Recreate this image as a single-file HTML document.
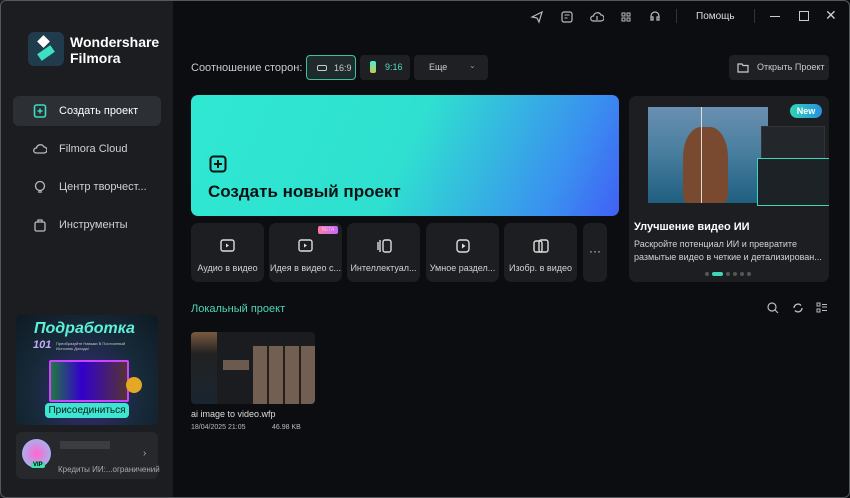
<!DOCTYPE html>
<html><head><meta charset="utf-8"><style>
*{margin:0;padding:0;box-sizing:border-box}
body{width:850px;height:498px;background:#0b0d10;font-family:"Liberation Sans","Noto Sans CJK SC",sans-serif;color:#fff;position:relative;overflow:hidden}
.win{position:absolute;inset:0;border:1px solid #55585d;border-radius:6px;pointer-events:none;z-index:9}
.side{position:absolute;left:0;top:0;width:173px;height:498px;background:#1b1d21}
.abs{position:absolute}
.nav{position:absolute;left:13px;width:148px;height:30px;border-radius:6px;font-size:11px;color:#cfd1d4;display:flex;align-items:center;padding-left:46px}
.nav svg{position:absolute;left:20px;top:8px}
.tool{position:absolute;top:223px;width:73px;height:59px;background:#1c1e22;border-radius:7px;font-size:9px;color:#d0d2d5;text-align:center}
.tool svg{position:absolute;left:28px;top:14px}
.tool span{position:absolute;left:0;right:0;top:40px;white-space:nowrap}
.ic{position:absolute;top:10px}
</style></head><body>
<div class="win"></div>
<div class="side">
  <div class="abs" style="left:28px;top:32px;width:36px;height:34px;background:#1f3b4c;border-radius:6px">
    <svg width="36" height="34"><rect x="11" y="5" width="9" height="9" fill="#fff" transform="rotate(45 15.5 9.5)"/><rect x="10" y="17" width="16" height="8" fill="#3de0c0" transform="rotate(-35 18 21)"/></svg>
  </div>
  <div class="abs" style="left:70px;top:34px;font-size:14px;font-weight:bold;line-height:16px">Wondershare<br>Filmora</div>
  <div class="nav" style="top:96px;background:#2c2f34;color:#fff">
    <svg width="14" height="14"><rect x="1.5" y="1" width="11" height="12" rx="2" fill="none" stroke="#3ddbc0" stroke-width="1.6"/><path d="M7 4.5v5M4.5 7h5" stroke="#3ddbc0" stroke-width="1.5"/></svg>Создать проект</div>
  <div class="nav" style="top:134px"><svg width="14" height="14"><path d="M3 11h8a3 3 0 0 0 0-6 4 4 0 0 0-7.5 1A2.5 2.5 0 0 0 3 11z" fill="none" stroke="#bbb" stroke-width="1.3"/></svg>Filmora Cloud</div>
  <div class="nav" style="top:172px"><svg width="14" height="14"><circle cx="7" cy="6" r="4.5" fill="none" stroke="#bbb" stroke-width="1.3"/><path d="M5 12h4" stroke="#bbb" stroke-width="1.3"/></svg>Центр творчест...</div>
  <div class="nav" style="top:210px"><svg width="14" height="14"><rect x="2" y="4" width="10" height="9" rx="1.5" fill="none" stroke="#bbb" stroke-width="1.3"/><path d="M5 4V2h4v2" fill="none" stroke="#bbb" stroke-width="1.3"/></svg>Инструменты</div>
  <div class="abs" style="left:16px;top:315px;width:142px;height:110px;border-radius:5px;background:radial-gradient(ellipse at 50% 70%,#3a2a80 0%,#172a3a 55%,#0e1a22 100%);overflow:hidden">
    <div class="abs" style="left:18px;top:5px;font-size:16px;font-weight:bold;font-style:italic;color:#5ef0d8">Подработка</div>
    <div class="abs" style="left:17px;top:24px;font-size:11px;font-weight:bold;font-style:italic;color:#c8a8ff">101</div>
    <div class="abs" style="left:40px;top:26px;font-size:4px;color:#ccc;width:80px">Преобразуйте Навыки В Постоянный Источник Дохода!</div>
    <div class="abs" style="left:33px;top:45px;width:80px;height:42px;background:linear-gradient(90deg,#274,#30c 40%,#533 100%);border:2px solid #c4f;border-radius:2px"></div>
    <div class="abs" style="left:110px;top:62px;width:16px;height:16px;border-radius:50%;background:#e5a824"></div>
    <div class="abs" style="left:29px;top:88px;width:84px;height:15px;background:#3ee6d0;border-radius:4px;color:#0b1a1a;font-size:10px;text-align:center;line-height:15px">Присоединиться</div>
  </div>
  <div class="abs" style="left:16px;top:432px;width:142px;height:47px;background:#26282c;border-radius:6px">
    <div class="abs" style="left:6px;top:7px;width:29px;height:29px;border-radius:50%;background:radial-gradient(circle,#f6c,#8cf)"></div>
    <div class="abs" style="left:15px;top:30px;font-size:6px;background:#3de0b0;color:#000;padding:0 2px;border-radius:2px;font-weight:bold">VIP</div>
    <div class="abs" style="left:44px;top:9px;width:50px;height:8px;background:#3a3d42"></div>
    <div class="abs" style="left:42px;top:33px;font-size:8px;color:#aaa;white-space:nowrap">Кредиты ИИ:...ограничений</div>
    <div class="abs" style="left:127px;top:16px;font-size:10px;color:#aaa">›</div>
  </div>
</div>
<svg class="ic" style="left:530px" width="14" height="14"><path d="M2 7l10-5-3 10-2-4z" fill="none" stroke="#bbb" stroke-width="1.2"/></svg>
<svg class="ic" style="left:560px" width="14" height="14"><rect x="2" y="2" width="10" height="10" rx="2" fill="none" stroke="#bbb" stroke-width="1.2"/><path d="M4.5 5h5M4.5 8h3" stroke="#bbb"/></svg>
<svg class="ic" style="left:590px" width="14" height="14"><path d="M3 11h8a3 3 0 0 0 0-6 4 4 0 0 0-7.5 1A2.5 2.5 0 0 0 3 11zM7 6v4" fill="none" stroke="#bbb" stroke-width="1.2"/></svg>
<svg class="ic" style="left:619px" width="14" height="14"><rect x="3" y="3" width="3" height="3" fill="none" stroke="#bbb"/><rect x="8" y="3" width="3" height="3" fill="none" stroke="#bbb"/><rect x="3" y="8" width="3" height="3" fill="none" stroke="#bbb"/><rect x="8" y="8" width="3" height="3" fill="none" stroke="#bbb"/></svg>
<svg class="ic" style="left:648px" width="14" height="14"><path d="M3 8V6a4 4 0 0 1 8 0v2M3 7h2v3H3zM9 7h2v3H9z" fill="none" stroke="#bbb" stroke-width="1.2"/></svg>
<div class="abs" style="left:676px;top:9px;width:1px;height:14px;background:#333"></div>
<div class="abs" style="left:696px;top:11px;font-size:10px;color:#ddd">Помощь</div>
<div class="abs" style="left:754px;top:9px;width:1px;height:14px;background:#333"></div>
<div class="abs" style="left:770px;top:16px;width:10px;height:1px;background:#ccc"></div>
<div class="abs" style="left:799px;top:11px;width:10px;height:10px;border:1.3px solid #ccc"></div>
<div class="abs" style="left:825px;top:7px;font-size:14px;color:#ccc">✕</div>
<div class="abs" style="left:191px;top:62px;font-size:11px;color:#c8cacd">Соотношение сторон:</div>
<div class="abs" style="left:306px;top:55px;width:50px;height:25px;border:1px solid #3dbfa5;background:#1f2a2c;border-radius:4px;font-size:9px;color:#ccc;padding:7px 0 0 27px"><div class="abs" style="left:10px;top:9px;width:10px;height:6px;border:1.3px solid #ccc;border-radius:2px"></div>16:9</div>
<div class="abs" style="left:360px;top:55px;width:50px;height:25px;background:#1e2024;border-radius:4px;font-size:9px;color:#4fe0c0;padding:7px 0 0 25px"><div class="abs" style="left:10px;top:6px;width:6px;height:12px;background:linear-gradient(#4ed,#cc4);border-radius:2px"></div>9:16</div>
<div class="abs" style="left:414px;top:55px;width:74px;height:25px;background:#1e2024;border-radius:4px;font-size:9px;color:#ccc;padding:7px 0 0 15px">Еще<span style="position:absolute;left:55px;top:6px;font-size:8px;color:#999">⌄</span></div>
<div class="abs" style="left:729px;top:55px;width:100px;height:25px;background:#1e2024;border-radius:4px;font-size:9px;color:#ccc;padding:7px 0 0 28px"><svg class="abs" style="left:8px;top:7px" width="12" height="11"><path d="M1 2h4l1 1.5h5v6.5H1z" fill="none" stroke="#ccc" stroke-width="1.2"/></svg>Открыть Проект</div>
<div class="abs" style="left:191px;top:95px;width:428px;height:121px;border-radius:7px;background:linear-gradient(115deg,#2fe8d2 0%,#2fe0d0 50%,#3a8ff0 85%,#4060f5 100%)">
  <svg class="abs" style="left:18px;top:60px" width="18" height="18"><rect x="1.5" y="1.5" width="15" height="15" rx="3" fill="none" stroke="#111" stroke-width="2"/><path d="M9 5v8M5 9h8" stroke="#111" stroke-width="2"/></svg>
  <div class="abs" style="left:17px;top:87px;font-size:17px;color:#0b1214;font-weight:bold">Создать новый проект</div>
</div>
<div class="tool" style="left:191px"><svg width="18" height="18"><rect x="2" y="3" width="13" height="11" rx="2" fill="none" stroke="#ddd" stroke-width="1.4"/><path d="M7 6.5v4l3-2z" fill="#ddd"/></svg><span>Аудио в видео</span></div>
<div class="tool" style="left:269px"><svg width="18" height="18"><rect x="2" y="3" width="13" height="11" rx="2" fill="none" stroke="#ddd" stroke-width="1.4"/><path d="M7 6.5v4l3-2z" fill="#ddd"/></svg><span>Идея в видео с...</span><div class="abs" style="left:49px;top:3px;width:20px;height:8px;background:linear-gradient(90deg,#f7a,#c6f);border-radius:2px;font-size:5px;line-height:8px">BETA</div></div>
<div class="tool" style="left:347px"><svg width="18" height="18"><path d="M5 3v12M3 5v8" stroke="#ddd" stroke-width="1.4"/><rect x="8" y="3" width="8" height="12" rx="2" fill="none" stroke="#ddd" stroke-width="1.4"/></svg><span>Интеллектуал...</span></div>
<div class="tool" style="left:426px"><svg width="18" height="18"><rect x="3" y="3" width="12" height="12" rx="3" fill="none" stroke="#ddd" stroke-width="1.4"/><path d="M8 6.5v5l3.5-2.5z" fill="#ddd"/></svg><span>Умное раздел...</span></div>
<div class="tool" style="left:504px"><svg width="18" height="18"><rect x="2" y="4" width="8" height="11" rx="2" fill="none" stroke="#ddd" stroke-width="1.4"/><rect x="7" y="3" width="9" height="12" rx="2" fill="none" stroke="#ddd" stroke-width="1.4"/></svg><span>Изобр. в видео</span></div>
<div class="tool" style="left:583px;width:24px"><span style="top:21px;font-size:12px">···</span></div>
<div class="abs" style="left:629px;top:96px;width:200px;height:186px;background:#1c1e22;border-radius:7px;overflow:hidden">
  <div class="abs" style="left:19px;top:11px;width:120px;height:96px;background:linear-gradient(180deg,#6a8fb0 0%,#4a7fa0 45%,#1f5f80 100%)"><div class="abs" style="left:35px;top:20px;width:45px;height:76px;background:#7a4a30;border-radius:40% 40% 10% 10%"></div><div class="abs" style="left:53px;top:0;width:1px;height:96px;background:#ddd"></div></div>
  <div class="abs" style="left:132px;top:30px;width:64px;height:55px;background:#23272c;border:1px solid #333"></div>
  <div class="abs" style="left:128px;top:62px;width:74px;height:48px;background:#1d2226;border:1.5px solid #3fd6b8"></div>
  <div class="abs" style="left:161px;top:8px;width:32px;height:14px;border-radius:7px;background:linear-gradient(90deg,#2fd4b4,#2a8fe0);font-size:9px;font-weight:bold;text-align:center;line-height:14px">New</div>
  <div class="abs" style="left:5px;top:125px;font-size:11px;font-weight:bold">Улучшение видео ИИ</div>
  <div class="abs" style="left:5px;top:142px;font-size:9px;color:#d0d2d5;line-height:13px;white-space:nowrap">Раскройте потенциал ИИ и превратите<br>размытые видео в четкие и детализирован...</div>
  <div class="abs" style="left:76px;top:176px;display:flex;gap:3px;align-items:center"><i style="width:4px;height:4px;border-radius:2px;background:#555"></i><i style="width:11px;height:4px;border-radius:2px;background:#3fd6b8"></i><i style="width:4px;height:4px;border-radius:2px;background:#555"></i><i style="width:4px;height:4px;border-radius:2px;background:#555"></i><i style="width:4px;height:4px;border-radius:2px;background:#555"></i><i style="width:4px;height:4px;border-radius:2px;background:#555"></i></div>
</div>
<div class="abs" style="left:191px;top:303px;font-size:11px;color:#4fd6b8">Локальный проект</div>
<svg class="abs" style="left:767px;top:302px" width="12" height="12"><circle cx="5" cy="5" r="4" fill="none" stroke="#bbb" stroke-width="1.2"/><path d="M8 8l3 3" stroke="#bbb" stroke-width="1.2"/></svg>
<svg class="abs" style="left:792px;top:302px" width="12" height="12"><path d="M2 6a4 4 0 0 1 7-2.5M10 6a4 4 0 0 1-7 2.5" fill="none" stroke="#bbb" stroke-width="1.4"/></svg>
<svg class="abs" style="left:816px;top:302px" width="12" height="12"><rect x="1" y="1" width="3" height="3" fill="none" stroke="#bbb"/><rect x="1" y="7" width="3" height="3" fill="none" stroke="#bbb"/><path d="M6 2.5h5M6 8.5h5M6 5h5" stroke="#bbb"/></svg>
<div class="abs" style="left:191px;top:332px;width:124px;height:72px;border-radius:4px;background:#1a1c20;overflow:hidden">
  <div class="abs" style="left:0;top:0;width:26px;height:72px;background:linear-gradient(#7a5a40,#222 30%,#1a2530)"></div>
  <div class="abs" style="left:62px;top:14px;width:62px;height:58px;background:repeating-linear-gradient(90deg,#8a7060 0 14px,#222 14px 16px),#555;opacity:.8"></div>
  <div class="abs" style="left:32px;top:28px;width:26px;height:10px;background:#6b5a50"></div>
</div>
<div class="abs" style="left:191px;top:409px;font-size:9px;color:#ddd">ai image to video.wfp</div>
<div class="abs" style="left:191px;top:424px;font-size:7px;color:#bbb">18/04/2025 21:05</div>
<div class="abs" style="left:272px;top:424px;font-size:7px;color:#bbb">46.98 KB</div>
</body></html>
